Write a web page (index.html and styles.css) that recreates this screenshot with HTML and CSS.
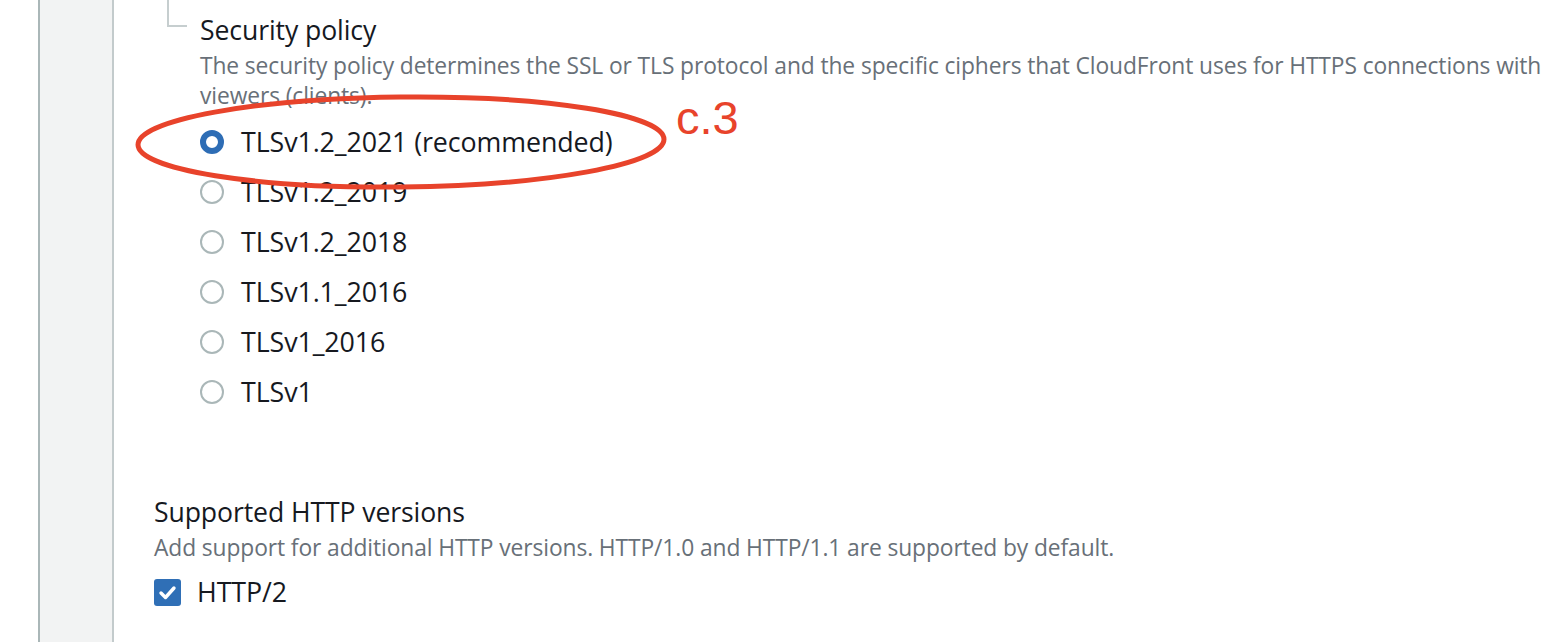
FILE: index.html
```html
<!DOCTYPE html>
<html>
<head>
<meta charset="utf-8">
<link rel="stylesheet" href="styles.css">
</head>
<body>
<div class="page">
  <div class="gutter"></div>
  <div class="rail"></div>
  <main class="content">
    <section class="nested">
      <div class="connector"></div>
      <div class="nested-body">
        <h2 class="label">Security policy</h2>
        <p class="desc">The security policy determines the SSL or TLS protocol and the specific ciphers that CloudFront uses for HTTPS connections with viewers (clients).</p>
        <ul class="radios">
          <li class="radio-row"><span class="radio checked"></span><span class="opt">TLSv1.2_2021 (recommended)</span></li>
          <li class="radio-row"><span class="radio"></span><span class="opt">TLSv1.2_2019</span></li>
          <li class="radio-row"><span class="radio"></span><span class="opt">TLSv1.2_2018</span></li>
          <li class="radio-row"><span class="radio"></span><span class="opt">TLSv1.1_2016</span></li>
          <li class="radio-row"><span class="radio"></span><span class="opt">TLSv1_2016</span></li>
          <li class="radio-row"><span class="radio"></span><span class="opt">TLSv1</span></li>
        </ul>
      </div>
    </section>
    <section class="field">
      <h2 class="label">Supported HTTP versions</h2>
      <p class="desc">Add support for additional HTTP versions. HTTP/1.0 and HTTP/1.1 are supported by default.</p>
      <div class="check-row">
        <span class="checkbox"><svg width="27" height="27" viewBox="0 0 27 27"><path d="M7 14 L11.5 18.5 L20 9" fill="none" stroke="#fff" stroke-width="3.4" stroke-linecap="round" stroke-linejoin="round"/></svg></span>
        <span class="opt">HTTP/2</span>
      </div>
    </section>
  </main>
</div>
<div class="annotation">
  <svg class="ring" width="560" height="120" viewBox="0 0 560 120"><ellipse cx="266" cy="56" rx="263" ry="45" fill="none" stroke="#e8432b" stroke-width="5" transform="rotate(-0.6 266 56)"/></svg>
  <span class="note">c.3</span>
</div>
</body>
</html>
```

FILE: styles.css
```css
html, body {
  margin: 0;
  padding: 0;
  background: #ffffff;
}
body {
  font-family: "Open Sans", "Liberation Sans", sans-serif;
  color: #16191f;
  width: 1566px;
  height: 642px;
  overflow: hidden;
  position: relative;
}
.page {
  display: flex;
  height: 642px;
}
.gutter {
  width: 38px;
  flex: none;
  background: #ffffff;
}
.rail {
  width: 72px;
  flex: none;
  background: #f2f3f3;
  border-left: 2px solid #aab7b8;
  border-right: 2px solid #c3cbcc;
}
.content {
  flex: 1;
  padding-left: 40px;
}
.nested {
  display: flex;
  margin-left: 13px;
}
.connector {
  width: 18px;
  height: 25px;
  border-left: 2px solid #c6cecf;
  border-bottom: 2px solid #c6cecf;
  flex: none;
}
.nested-body {
  padding-left: 13px;
  padding-top: 9px;
}
.label {
  margin: 0;
  font-size: 26.6px;
  font-weight: 400;
  line-height: 42px;
  color: #16191f;
  letter-spacing: -0.1px;
}
.desc {
  margin: 0;
  font-size: 22.8px;
  line-height: 30px;
  color: #687078;
  letter-spacing: -0.1px;
}
.radios {
  list-style: none;
  margin: 6px 0 0;
  padding: 0;
}
.radio-row {
  display: flex;
  align-items: center;
  height: 50px;
}
.radio {
  width: 20px;
  height: 20px;
  border: 2px solid #aab7b8;
  border-radius: 50%;
  margin-right: 17px;
  flex: none;
  box-sizing: content-box;
}
.radio.checked {
  width: 12px;
  height: 12px;
  border: 6px solid #2e6db5;
  background: #ffffff;
}
.opt {
  font-size: 26.8px;
  line-height: 30px;
  color: #16191f;
  letter-spacing: -0.1px;
}
.field {
  margin-top: 74px;
}
.check-row {
  display: flex;
  align-items: center;
  margin-top: 14px;
}
.checkbox {
  width: 27px;
  height: 27px;
  border-radius: 3px;
  background: #2f6fb6;
  margin-right: 16px;
  display: flex;
}
.annotation {
  position: absolute;
  left: 0;
  top: 0;
}
.ring {
  position: absolute;
  left: 135px;
  top: 86px;
}
.note {
  position: absolute;
  left: 676px;
  top: 113px;
  font-family: "Liberation Sans", Arial, sans-serif;
  font-size: 47px;
  line-height: 10px;
  color: #e8432b;
  white-space: nowrap;
}
```
